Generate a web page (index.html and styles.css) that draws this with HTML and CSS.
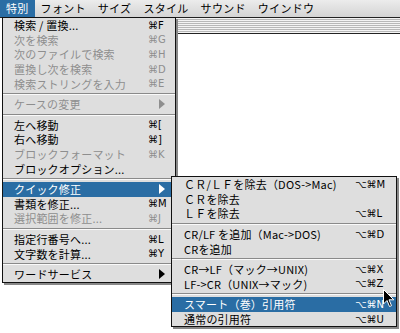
FILE: index.html
```html
<!DOCTYPE html>
<html lang="ja">
<head>
    <meta charset="UTF-8">
    <title>特別メニュー</title>
    <link rel="stylesheet" href="styles.css">
</head>
<body>
    <div class="screen">
        <div class="menubar">
            <span class="title active">特別</span>
            <span class="title">フォント</span>
            <span class="title">サイズ</span>
            <span class="title">スタイル</span>
            <span class="title">サウンド</span>
            <span class="title">ウインドウ</span>
        </div>

        <div class="window">
            <div class="window-bar"></div>
            <div class="window-body"></div>
        </div>

        <!-- 特別 menu -->
        <div class="menu main-menu">
            <div class="row"><span class="label">検索 / 置換...</span><span class="key">⌘F</span></div>
            <div class="row off"><span class="label">次を検索</span><span class="key">⌘G</span></div>
            <div class="row off"><span class="label">次のファイルで検索</span><span class="key">⌘H</span></div>
            <div class="row off"><span class="label">置換し次を検索</span><span class="key">⌘D</span></div>
            <div class="row off"><span class="label">検索ストリングを入力</span><span class="key">⌘E</span></div>
            <div class="sep"></div>
            <div class="row off"><span class="label">ケースの変更</span><span class="arrow"></span></div>
            <div class="sep"></div>
            <div class="row"><span class="label">左へ移動</span><span class="key">⌘[</span></div>
            <div class="row"><span class="label">右へ移動</span><span class="key">⌘]</span></div>
            <div class="row off"><span class="label">ブロックフォーマット</span><span class="key">⌘K</span></div>
            <div class="row"><span class="label">ブロックオプション...</span></div>
            <div class="sep"></div>
            <div class="row hot"><span class="label">クイック修正</span><span class="arrow"></span></div>
            <div class="row"><span class="label">書類を修正...</span><span class="key">⌘M</span></div>
            <div class="row off"><span class="label">選択範囲を修正...</span><span class="key">⌘J</span></div>
            <div class="sep"></div>
            <div class="row"><span class="label">指定行番号へ...</span><span class="key">⌘L</span></div>
            <div class="row"><span class="label">文字数を計算...</span><span class="key">⌘Y</span></div>
            <div class="sep"></div>
            <div class="row"><span class="label">ワードサービス</span><span class="arrow"></span></div>
        </div>

        <!-- クイック修正 submenu -->
        <div class="menu sub-menu">
            <div class="row"><span class="label">ＣＲ/ＬＦを除去（DOS-&gt;Mac)</span><span class="key">⌥⌘M</span></div>
            <div class="row"><span class="label">ＣＲを除去</span></div>
            <div class="row"><span class="label">ＬＦを除去</span><span class="key">⌥⌘L</span></div>
            <div class="sep"></div>
            <div class="row"><span class="label">CR/LF を追加（Mac-&gt;DOS)</span><span class="key">⌥⌘D</span></div>
            <div class="row"><span class="label">CRを追加</span></div>
            <div class="sep"></div>
            <div class="row"><span class="label">CR→LF（マック→UNIX)</span><span class="key">⌥⌘X</span></div>
            <div class="row"><span class="label">LF-&gt;CR（UNIX→マック)</span><span class="key">⌥⌘Z</span></div>
            <div class="sep"></div>
            <div class="row hot"><span class="label">スマート（巻）引用符</span><span class="key">⌥⌘N</span></div>
            <div class="row"><span class="label">通常の引用符</span><span class="key">⌥⌘U</span></div>
        </div>

        <svg class="cursor" width="12" height="19" viewBox="0 0 12 19">
            <path d="M0.5 0.5 L0.5 15 L4 11.5 L6.5 17.5 L8.5 16.7 L6 10.8 L10.8 10.8 Z" fill="#000" stroke="#fff" stroke-width="1"/>
        </svg>
    </div>
</body>
</html>
```

FILE: styles.css
```css
body {
    margin: 0;
    background: #fff;
    font-family: "Noto Sans CJK JP", "DejaVu Sans", sans-serif;
    font-size: 11px;
    color: #000;
}

.screen {
    position: relative;
    width: 400px;
    height: 333px;
    overflow: hidden;
}

.menubar {
    display: flex;
    height: 17px;
    background: linear-gradient(to bottom, #ececec, #d4d4d4);
    border-bottom: 1px solid #222;
}

.title {
    padding: 0 6px 0 6px;
    line-height: 17px;
    font-size: 11px;
    letter-spacing: 0.3px;
}

.title.active {
    background: #2a6da4;
    color: #fff;
}

.window-bar {
    height: 15px;
    margin-left: 175px;
    background: repeating-linear-gradient(to bottom, #f4f4f4 0, #f4f4f4 1px, #b8b8b8 1px, #b8b8b8 2px);
    border-bottom: 1px solid #222;
}

.window-body {
    height: 298px;
    background: #fff;
}

.menu {
    position: absolute;
    background: #dedede;
    border: 1px solid #111;
    box-shadow: 2px 2px 0 #888;
}

.main-menu {
    top: 17px;
    left: 2px;
    width: 172px;
}

.sub-menu {
    top: 176px;
    left: 171px;
    width: 224px;
}

.row {
    display: flex;
    align-items: center;
    height: 14.6px;
    padding: 0 9px 0 11px;
    white-space: nowrap;
}

.sub-menu .row {
    padding: 0 11px 0 12px;
}

.label {
    flex: 1;
    letter-spacing: 0.2px;
}

.key {
    width: 18px;
    font-family: "DejaVu Sans", sans-serif;
    font-size: 10px;
}

.sub-menu .key {
    width: 30px;
}

.row.off {
    color: #8e8e8e;
}

.row.hot {
    background: #2a6da4;
    color: #fff;
}

.arrow {
    width: 0;
    height: 0;
    margin-right: 1px;
    border-top: 5px solid transparent;
    border-bottom: 5px solid transparent;
    border-left: 6px solid #000;
}

.row.off .arrow {
    border-left-color: #8e8e8e;
}

.row.hot .arrow {
    border-left-color: #fff;
}

.sep {
    height: 6px;
    background: linear-gradient(to bottom, transparent 2px, #8a8a8a 2px, #8a8a8a 3px, #fafafa 3px, #fafafa 4px, transparent 4px);
}

.cursor {
    position: absolute;
    left: 383px;
    top: 289px;
}
```
